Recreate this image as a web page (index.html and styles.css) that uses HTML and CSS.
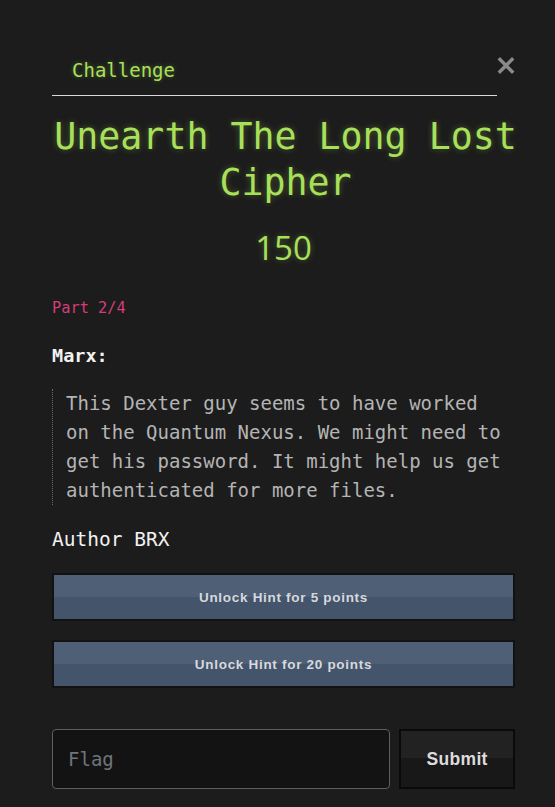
FILE: index.html
```html
<!DOCTYPE html>
<html>
<head>
<meta charset="utf-8">
<link rel="stylesheet" href="styles.css">
</head>
<body>
<div class="modal">
  <div class="top">
    <div class="tab">Challenge</div>
    <button class="close" aria-label="Close">
      <svg width="18" height="17" viewBox="0 0 18 17"><path d="M3 2.5 L15 14.5 M15 2.5 L3 14.5" stroke="#8a8a8a" stroke-width="3.4" stroke-linecap="square"/></svg>
    </button>
  </div>
  <h1 class="title">Unearth The Long Lost Cipher</h1>
  <div class="points">150</div>
  <div class="part">Part 2/4</div>
  <div class="speaker">Marx:</div>
  <blockquote class="quote">This Dexter guy seems to have worked on the Quantum Nexus. We might need to get his password. It might help us get authenticated for more files.</blockquote>
  <div class="author">Author BRX</div>
  <button class="hint hint-first">Unlock Hint for 5 points</button>
  <button class="hint hint-second">Unlock Hint for 20 points</button>
  <div class="submit-row">
    <input class="flag" type="text" placeholder="Flag">
    <button class="submit">Submit</button>
  </div>
</div>
</body>
</html>
```

FILE: styles.css
```css
html, body {
  margin: 0;
  padding: 0;
  background: #1c1c1c;
}
body {
  font-family: "DejaVu Sans Mono", "Liberation Mono", monospace;
  height: 807px;
  overflow: hidden;
}
.modal {
  width: 463px;
  padding-left: 52px;
  display: flex;
  flex-direction: column;
}
.top {
  display: flex;
  align-items: flex-start;
  margin-top: 58px;
}
.tab {
  width: 426px;
  padding: 0 0 13px 20px;
  line-height: 24px;
  font-size: 19px;
  color: #a8e05a;
  text-shadow: 0 0 5px rgba(168, 224, 90, 0.35);
  border-bottom: 1px solid #d8d8d8;
}
.close {
  margin: -1px 0 0 0;
  padding: 0;
  border: 0;
  background: none;
  width: 18px;
  height: 17px;
  display: block;
}
.close svg { display: block; }
.title {
  margin: 18px -6px 0 -2px;
  font-size: 36.6px;
  font-weight: normal;
  line-height: 46px;
  text-align: center;
  color: #a8e05a;
  text-shadow: 0 0 6px rgba(168, 224, 90, 0.35);
}
.points {
  margin-top: 22px;
  line-height: 40px;
  font-size: 33px;
  text-align: center;
  color: #a8e05a;
  font-family: "Open Sans", "DejaVu Sans", sans-serif;
  text-shadow: 0 0 6px rgba(168, 224, 90, 0.35);
}
.part {
  margin-top: 30px;
  line-height: 20px;
  font-size: 15.3px;
  color: #d63c78;
}
.speaker {
  margin-top: 26px;
  line-height: 24px;
  font-size: 18.5px;
  font-weight: bold;
  color: #f2f2f2;
}
.quote {
  margin: 21px 0 0;
  padding: 0 8px 0 13px;
  border-left: 1px dotted #6a6a6a;
  line-height: 29px;
  font-size: 19px;
  color: #b4b4b4;
}
.author {
  margin-top: 23px;
  line-height: 24px;
  font-size: 19.5px;
  color: #f2f2f2;
}
.hint {
  display: block;
  width: 463px;
  height: 48px;
  border: 2px solid #121212;
  background: linear-gradient(to bottom, #4f5f76 0%, #4f5f76 50%, #44546a 50%, #44546a 100%);
  color: #d6d9de;
  font-family: "Liberation Sans", Arial, sans-serif;
  font-weight: bold;
  font-size: 13.5px;
  letter-spacing: 0.7px;
  padding: 0;
  cursor: pointer;
}
.hint-first { margin-top: 21px; }
.hint-second { margin-top: 19px; }
.submit-row {
  margin-top: 41px;
  display: flex;
  gap: 9px;
}
.flag {
  box-sizing: border-box;
  width: 339px;
  height: 60px;
  border: 1px solid #5e5e5e;
  border-radius: 4px;
  background: #131313;
  padding: 0 15px;
  font-family: "DejaVu Sans Mono", "Liberation Mono", monospace;
  font-size: 19px;
  color: #ccc;
  outline: none;
}
.flag::placeholder { color: #6f757b; }
.submit {
  box-sizing: border-box;
  width: 116px;
  height: 60px;
  border: 2px solid #0a0a0a;
  background: linear-gradient(to bottom, #222 0%, #222 48%, #181818 48%, #181818 100%);
  color: #dcdcdc;
  font-family: "Liberation Sans", Arial, sans-serif;
  font-weight: bold;
  font-size: 17.5px;
  letter-spacing: 0.3px;
  padding: 0;
}
```
